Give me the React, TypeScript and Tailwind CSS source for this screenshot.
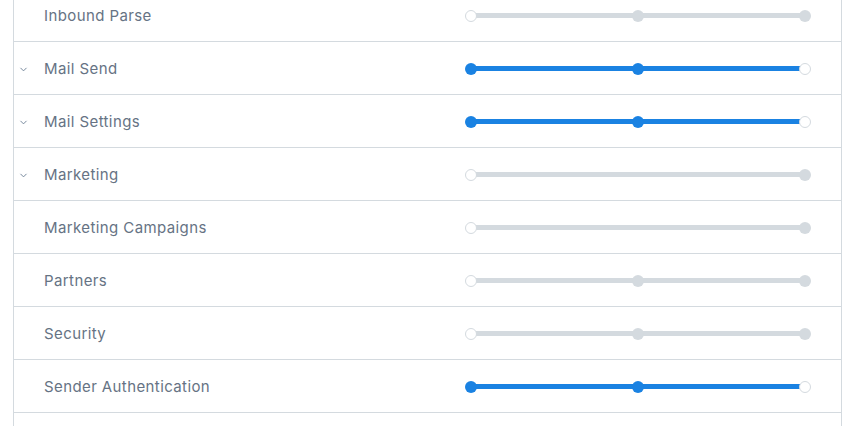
import { ChevronDown } from 'lucide-react'

type Level = 'none' | 'full'

const rows: { name: string; expandable: boolean; level: Level; middle: boolean }[] = [
  { name: 'Inbound Parse', expandable: false, level: 'none', middle: true },
  { name: 'Mail Send', expandable: true, level: 'full', middle: true },
  { name: 'Mail Settings', expandable: true, level: 'full', middle: true },
  { name: 'Marketing', expandable: true, level: 'none', middle: false },
  { name: 'Marketing Campaigns', expandable: false, level: 'none', middle: false },
  { name: 'Partners', expandable: false, level: 'none', middle: true },
  { name: 'Security', expandable: false, level: 'none', middle: true },
  { name: 'Sender Authentication', expandable: false, level: 'full', middle: true },
]

function AccessSlider({ level, middle }: { level: Level; middle: boolean }) {
  const on = level === 'full'
  return (
    <div className="relative mt-[-1px] h-[12px] w-[346px]">
      <div className="absolute left-[6px] right-[6px] top-[3.5px] h-[5px] rounded-full bg-[#d4dadf]" />
      {on && <div className="absolute left-[6px] right-[10px] top-[3.5px] h-[5px] bg-[#1a82e2]" />}
      {/* left stop */}
      {on ? (
        <span className="absolute left-0 top-0 size-[12px] rounded-full bg-[#1a82e2]" />
      ) : (
        <span className="absolute left-0 top-0 size-[12px] rounded-full border border-[#d4dadf] bg-white" />
      )}
      {/* middle stop */}
      {middle && (
        <span
          className={`absolute left-[167px] top-0 size-[12px] rounded-full ${on ? 'bg-[#1a82e2]' : 'bg-[#d4dadf]'}`}
        />
      )}
      {/* right stop */}
      {on ? (
        <span className="absolute right-0 top-0 size-[12px] rounded-full border border-[#d4dadf] bg-white" />
      ) : (
        <span className="absolute right-0 top-0 size-[12px] rounded-full bg-[#d4dadf]" />
      )}
    </div>
  )
}

export default function App() {
  return (
    <div className="h-[426px] w-[860px] overflow-hidden bg-white" style={{ fontFamily: 'Inter, sans-serif' }}>
      <div className="ml-[13px] mt-[-11px] w-[829px] border-x border-[#d4dadf]">
        {rows.map((r) => (
          <div key={r.name} className="flex h-[53px] items-center border-b border-[#d4dadf] pt-[2px]">
            <div className="flex w-[30px] pl-[4px]">
              {r.expandable && <ChevronDown className="size-[11px] text-[#6b7f95]" strokeWidth={2} />}
            </div>
            <span className="w-[421px] text-[15px] tracking-[0.4px] text-[#667384]">{r.name}</span>
            <AccessSlider level={r.level} middle={r.middle} />
          </div>
        ))}
        {/* next row, cut off by the bottom edge */}
        <div className="h-[53px]" />
      </div>
    </div>
  )
}
